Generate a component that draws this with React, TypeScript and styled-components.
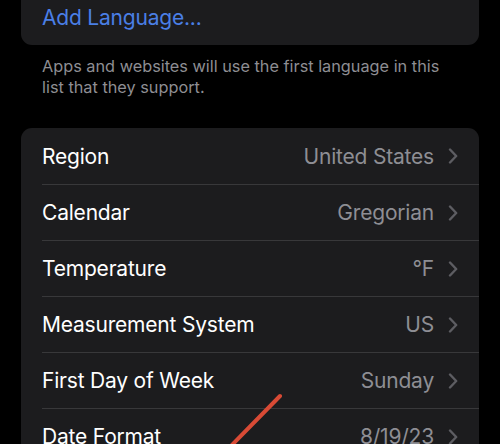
import React from 'react'
import styled, { createGlobalStyle } from 'styled-components'

const GlobalStyle = createGlobalStyle`
  html, body {
    margin: 0;
    padding: 0;
    background: #000;
  }
  body {
    font-family: Inter, "Noto Sans", "Liberation Sans", sans-serif;
    -webkit-font-smoothing: antialiased;
  }
`

const Screen = styled.div`
  position: relative;
  width: 500px;
  height: 444px;
  overflow: hidden;
  background: #000;
`

const Scroller = styled.div`
  display: flex;
  flex-direction: column;
  padding: 0 21px;
  margin-top: -11px;
`

const Card = styled.div`
  display: flex;
  flex-direction: column;
  background: #1c1c1e;
  border-radius: 11px;
  overflow: hidden;
`

const Row = styled.div<{ $divider?: boolean }>`
  display: flex;
  align-items: center;
  height: 56px;
  box-sizing: border-box;
  margin-left: 21px;
  padding-right: 21px;
  border-top: ${(p) => (p.$divider ? '1px solid #38383a' : 'none')};
`

const Label = styled.span<{ $accent?: boolean }>`
  flex: 1;
  font-size: 21px;
  letter-spacing: -0.2px;
  color: ${(p) => (p.$accent ? '#4a7fe6' : '#ffffff')};
`

const Value = styled.span`
  font-size: 21px;
  letter-spacing: -0.2px;
  color: #8e8e94;
  margin-right: 14px;
`

const Chevron = styled.svg`
  width: 10px;
  height: 16px;
  flex-shrink: 0;
`

const Footer = styled.p`
  margin: 11px 0 0;
  padding: 0 21px;
  font-size: 16.3px;
  line-height: 21px;
  color: #8e8e93;
  height: 72px;
`

const Annotation = styled.svg`
  position: absolute;
  left: 0;
  top: 0;
  pointer-events: none;
`

const settings: { label: string; value: string }[] = [
  { label: 'Region', value: 'United States' },
  { label: 'Calendar', value: 'Gregorian' },
  { label: 'Temperature', value: '°F' },
  { label: 'Measurement System', value: 'US' },
  { label: 'First Day of Week', value: 'Sunday' },
  { label: 'Date Format', value: '8/19/23' },
]

const ChevronIcon = () => (
  <Chevron viewBox="0 0 10 16">
    <path
      d="M2 1.5 L8.2 8 L2 14.5"
      fill="none"
      stroke="#5d5d62"
      strokeWidth="2.4"
      strokeLinecap="round"
      strokeLinejoin="round"
    />
  </Chevron>
)

export default function App() {
  return (
    <Screen>
      <GlobalStyle />
      <Scroller>
        <Card>
          <Row>
            <Label $accent>Add Language...</Label>
          </Row>
        </Card>
        <Footer>
          Apps and websites will use the first language in this list that they support.
        </Footer>
        <Card>
          {settings.map((s, i) => (
            <Row key={s.label} $divider={i > 0}>
              <Label>{s.label}</Label>
              <Value>{s.value}</Value>
              <ChevronIcon />
            </Row>
          ))}
        </Card>
      </Scroller>
      <Annotation width="500" height="444" viewBox="0 0 500 444">
        <line x1="280" y1="396" x2="228" y2="449" stroke="#d84a35" strokeWidth="4" strokeLinecap="round" />
      </Annotation>
    </Screen>
  )
}
